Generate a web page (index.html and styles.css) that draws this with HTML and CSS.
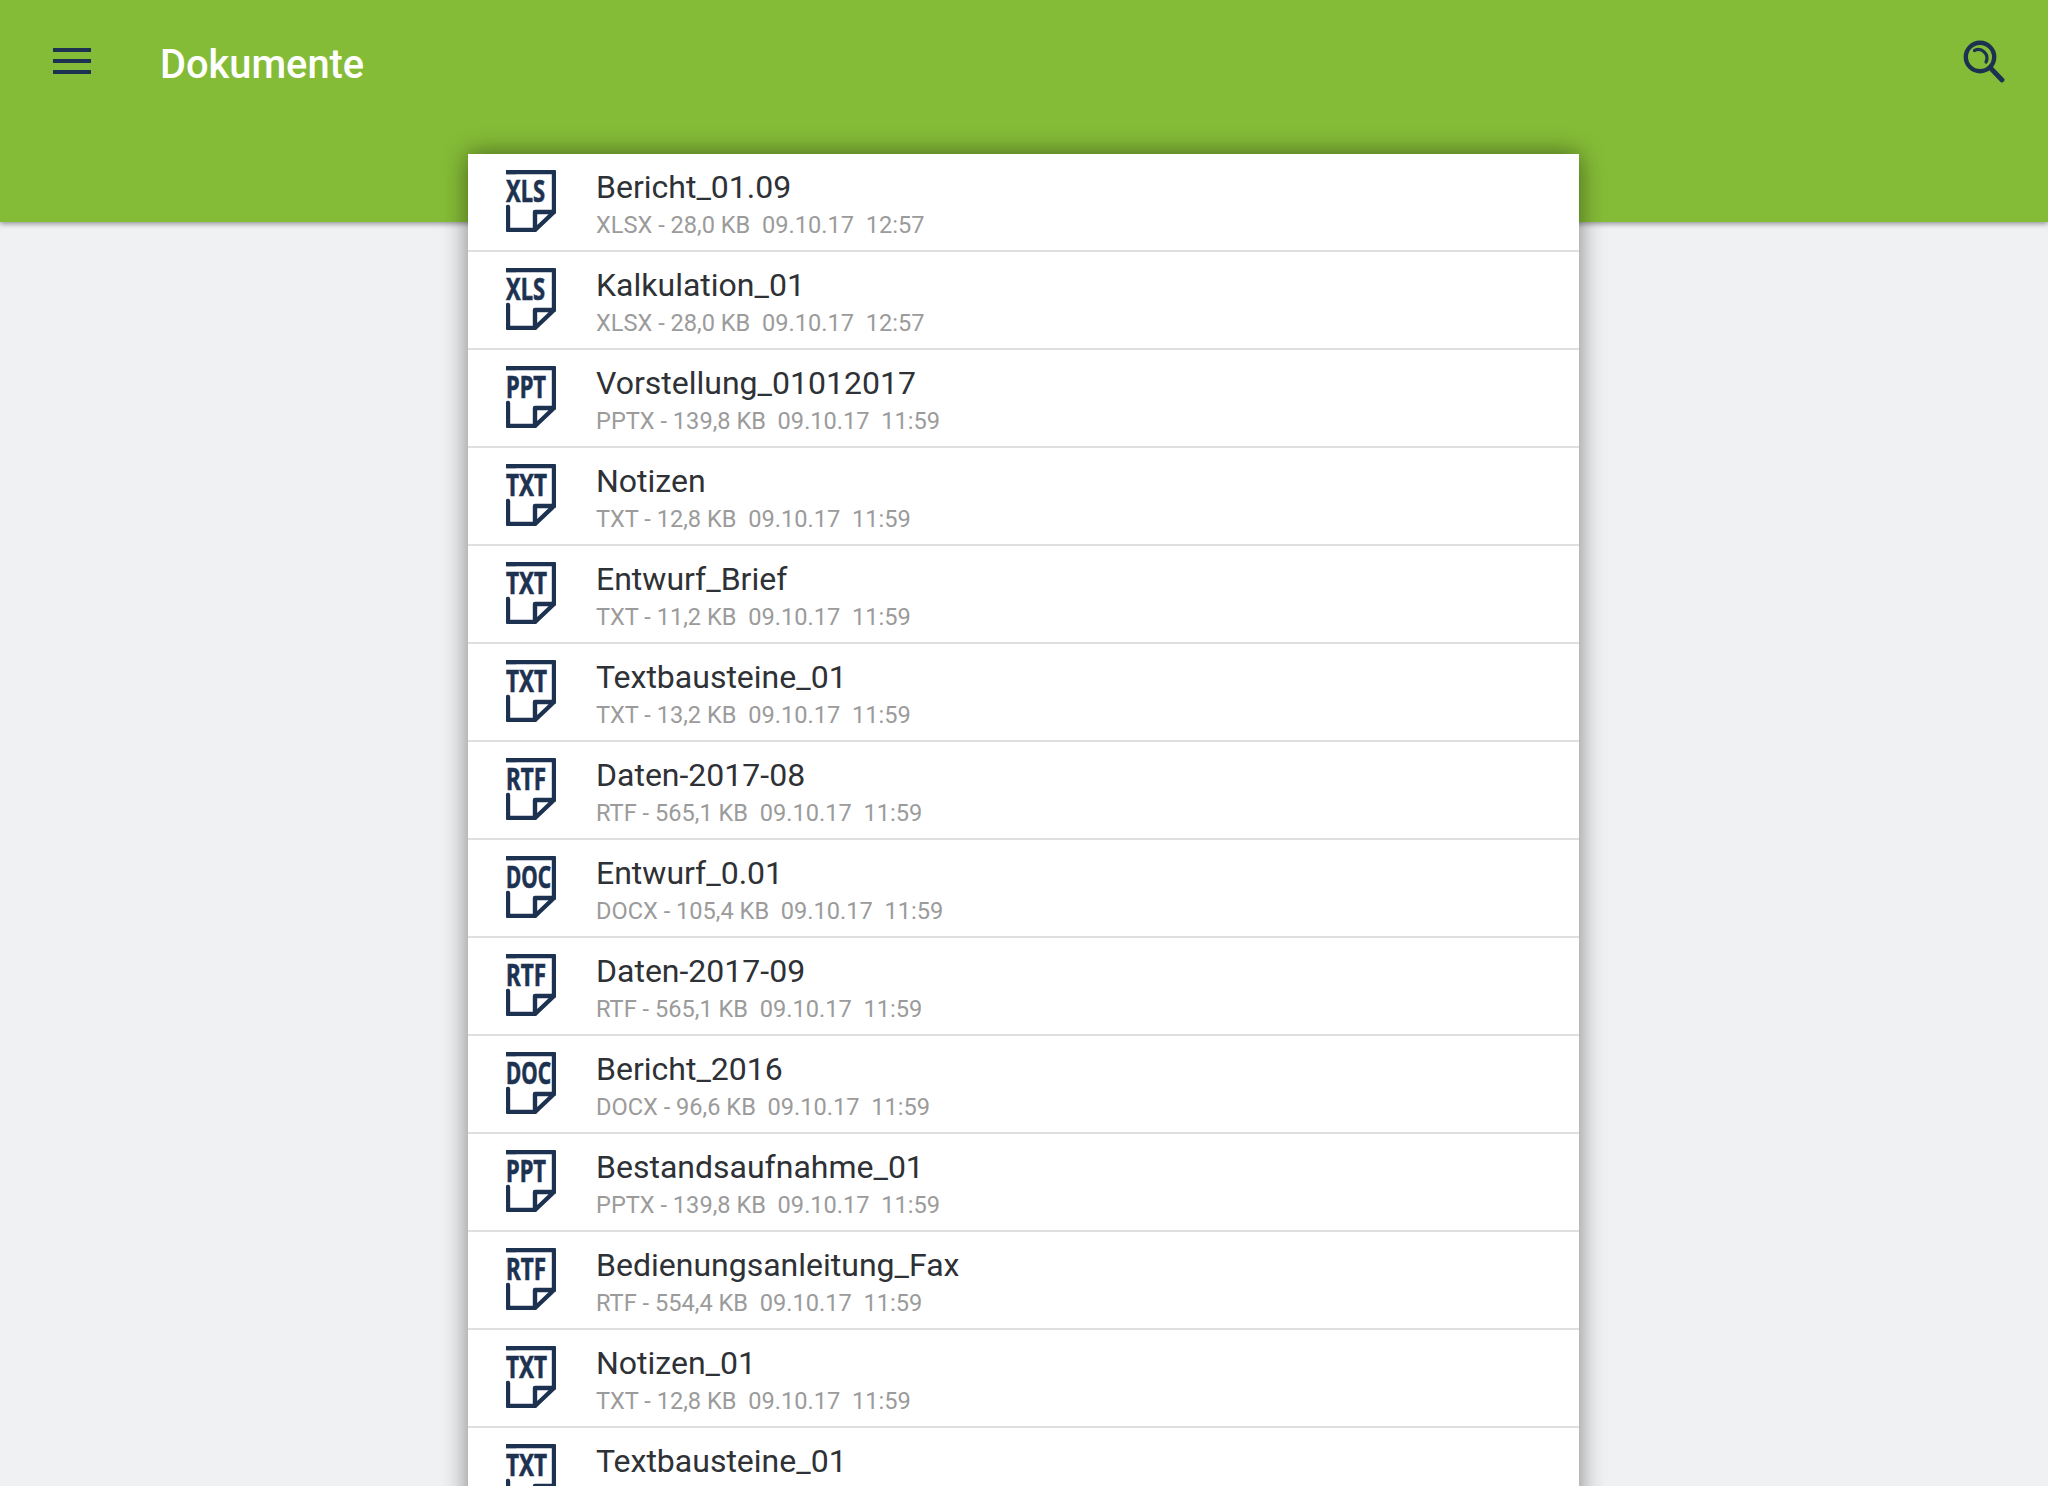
FILE: index.html
```html
<!DOCTYPE html>
<html lang="de">
<head>
<meta charset="utf-8">
<title>Dokumente</title>
<link rel="stylesheet" href="styles.css">
</head>
<body>
<svg class="defs" width="0" height="0" aria-hidden="true">
  <symbol id="sheet" viewBox="0 0 50 62">
    <path d="M0 2H48V42L29 60H2V37M29 60V42H48" fill="none" stroke="#1d3251" stroke-width="4.4" stroke-linejoin="round" stroke-linecap="round"/>
    <path d="M0 2H10" fill="none" stroke="#1d3251" stroke-width="4.4"/>
  </symbol>
</svg>
<header class="appbar">
  <button class="icon-btn menu-btn" aria-label="Menü"><span></span><span></span><span></span></button>
  <h1 class="title">Dokumente</h1>
  <svg class="search" viewBox="0 0 44 44" width="44" height="44" aria-label="Suchen">
    <circle cx="18" cy="18" r="14.2" fill="none" stroke="#1d3251" stroke-width="4.4"/>
    <path d="M12.5 11.5A8.6 8.6 0 0 1 24 23" fill="none" stroke="#1d3251" stroke-width="3.2" stroke-linecap="round"/>
    <path d="M29 29.5L40 41" fill="none" stroke="#1d3251" stroke-width="4.8" stroke-linecap="round"/>
  </svg>
</header>
<main class="content">
  <ul class="list">
    <li class="row"><svg class="doc" viewBox="0 0 50 62"><use href="#sheet"/><text x="0" y="32" textLength="39" lengthAdjust="spacingAndGlyphs">XLS</text></svg><div class="meta"><div class="name">Bericht_01.09</div><div class="info">XLSX - 28,0 KB&nbsp; 09.10.17&nbsp; 12:57</div></div></li>
    <li class="row"><svg class="doc" viewBox="0 0 50 62"><use href="#sheet"/><text x="0" y="32" textLength="39" lengthAdjust="spacingAndGlyphs">XLS</text></svg><div class="meta"><div class="name">Kalkulation_01</div><div class="info">XLSX - 28,0 KB&nbsp; 09.10.17&nbsp; 12:57</div></div></li>
    <li class="row"><svg class="doc" viewBox="0 0 50 62"><use href="#sheet"/><text x="0" y="32" textLength="40" lengthAdjust="spacingAndGlyphs">PPT</text></svg><div class="meta"><div class="name">Vorstellung_01012017</div><div class="info">PPTX - 139,8 KB&nbsp; 09.10.17&nbsp; 11:59</div></div></li>
    <li class="row"><svg class="doc" viewBox="0 0 50 62"><use href="#sheet"/><text x="0" y="32" textLength="41" lengthAdjust="spacingAndGlyphs">TXT</text></svg><div class="meta"><div class="name">Notizen</div><div class="info">TXT - 12,8 KB&nbsp; 09.10.17&nbsp; 11:59</div></div></li>
    <li class="row"><svg class="doc" viewBox="0 0 50 62"><use href="#sheet"/><text x="0" y="32" textLength="41" lengthAdjust="spacingAndGlyphs">TXT</text></svg><div class="meta"><div class="name">Entwurf_Brief</div><div class="info">TXT - 11,2 KB&nbsp; 09.10.17&nbsp; 11:59</div></div></li>
    <li class="row"><svg class="doc" viewBox="0 0 50 62"><use href="#sheet"/><text x="0" y="32" textLength="41" lengthAdjust="spacingAndGlyphs">TXT</text></svg><div class="meta"><div class="name">Textbausteine_01</div><div class="info">TXT - 13,2 KB&nbsp; 09.10.17&nbsp; 11:59</div></div></li>
    <li class="row"><svg class="doc" viewBox="0 0 50 62"><use href="#sheet"/><text x="0" y="32" textLength="40" lengthAdjust="spacingAndGlyphs">RTF</text></svg><div class="meta"><div class="name">Daten-2017-08</div><div class="info">RTF - 565,1 KB&nbsp; 09.10.17&nbsp; 11:59</div></div></li>
    <li class="row"><svg class="doc" viewBox="0 0 50 62"><use href="#sheet"/><text x="0" y="32" textLength="45" lengthAdjust="spacingAndGlyphs">DOC</text></svg><div class="meta"><div class="name">Entwurf_0.01</div><div class="info">DOCX - 105,4 KB&nbsp; 09.10.17&nbsp; 11:59</div></div></li>
    <li class="row"><svg class="doc" viewBox="0 0 50 62"><use href="#sheet"/><text x="0" y="32" textLength="40" lengthAdjust="spacingAndGlyphs">RTF</text></svg><div class="meta"><div class="name">Daten-2017-09</div><div class="info">RTF - 565,1 KB&nbsp; 09.10.17&nbsp; 11:59</div></div></li>
    <li class="row"><svg class="doc" viewBox="0 0 50 62"><use href="#sheet"/><text x="0" y="32" textLength="45" lengthAdjust="spacingAndGlyphs">DOC</text></svg><div class="meta"><div class="name">Bericht_2016</div><div class="info">DOCX - 96,6 KB&nbsp; 09.10.17&nbsp; 11:59</div></div></li>
    <li class="row"><svg class="doc" viewBox="0 0 50 62"><use href="#sheet"/><text x="0" y="32" textLength="40" lengthAdjust="spacingAndGlyphs">PPT</text></svg><div class="meta"><div class="name">Bestandsaufnahme_01</div><div class="info">PPTX - 139,8 KB&nbsp; 09.10.17&nbsp; 11:59</div></div></li>
    <li class="row"><svg class="doc" viewBox="0 0 50 62"><use href="#sheet"/><text x="0" y="32" textLength="40" lengthAdjust="spacingAndGlyphs">RTF</text></svg><div class="meta"><div class="name">Bedienungsanleitung_Fax</div><div class="info">RTF - 554,4 KB&nbsp; 09.10.17&nbsp; 11:59</div></div></li>
    <li class="row"><svg class="doc" viewBox="0 0 50 62"><use href="#sheet"/><text x="0" y="32" textLength="41" lengthAdjust="spacingAndGlyphs">TXT</text></svg><div class="meta"><div class="name">Notizen_01</div><div class="info">TXT - 12,8 KB&nbsp; 09.10.17&nbsp; 11:59</div></div></li>
    <li class="row"><svg class="doc" viewBox="0 0 50 62"><use href="#sheet"/><text x="0" y="32" textLength="41" lengthAdjust="spacingAndGlyphs">TXT</text></svg><div class="meta"><div class="name">Textbausteine_01</div></div></li>
  </ul>
</main>
</body>
</html>
```
FILE: styles.css
```css
* { box-sizing: border-box; }
html, body { margin: 0; height: 1486px; overflow: hidden; }
body { background: #f0f1f3; font-family: Roboto, "Liberation Sans", sans-serif; }
.defs { display: block; height: 0; }
.appbar {
  position: relative;
  height: 222px;
  background: #85bc37;
  box-shadow: 0 2px 5px rgba(0,0,0,.38);
  display: flex;
  align-items: flex-start;
  padding: 48px 42px 0 53px;
}
.icon-btn { background: none; border: 0; padding: 0; }
.menu-btn { width: 38px; display: flex; flex-direction: column; gap: 7px; }
.menu-btn span { display: block; height: 4px; background: #1d3251; }
.title {
  margin: -7px 0 0 69px;
  font-size: 39.8px;
  line-height: 48px;
  font-weight: 500;
  color: #fff;
  flex: 1;
}
.search { margin-top: -9px; flex: none; }
.content { position: relative; display: flex; justify-content: center; margin-top: -68px; }
.list {
  list-style: none;
  margin: 0 0 0 -1px;
  padding: 0;
  width: 1111px;
  background: #fff;
  box-shadow: 0 0 24px rgba(0,0,0,.48);
}
.row {
  height: 98px;
  border-bottom: 2px solid #dfdfdf;
  display: flex;
  align-items: flex-start;
  padding: 16px 0 0 38px;
}
.doc { width: 50px; height: 62px; flex: none; overflow: visible; }
.doc text {
  font-family: "Noto Sans", "Open Sans", sans-serif;
  font-weight: 700;
  font-size: 30px;
  fill: #1d3251;
  stroke: #1d3251;
  stroke-width: .6px;
}
.meta { margin: -3px 0 0 40px; }
.name { font-size: 32px; line-height: 40px; color: #2e3135; }
.info { font-size: 23.6px; line-height: 32px; color: #9b9b9b; margin-top: 2px; }
```
